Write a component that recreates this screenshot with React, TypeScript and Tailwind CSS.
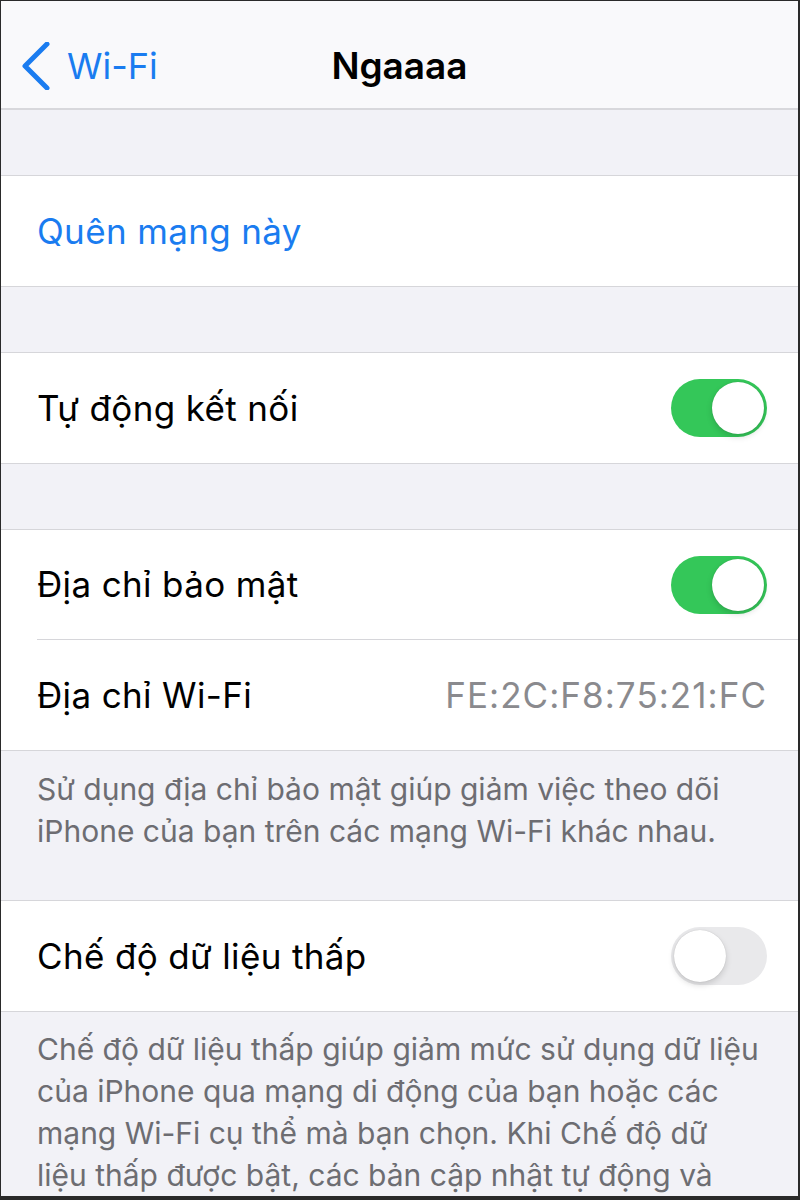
function Toggle({ on }: { on: boolean }) {
  return (
    <div
      className={`relative h-[58px] w-[96px] shrink-0 rounded-full ${
        on ? "bg-[#34c759]" : "bg-[#e9e9eb]"
      }`}
    >
      <div
        className={`absolute top-[3px] h-[52px] w-[52px] rounded-full bg-white shadow-[0_3px_6px_rgba(0,0,0,0.15),0_0_1px_rgba(0,0,0,0.2)] ${
          on ? "right-[3px]" : "left-[3px]"
        }`}
      />
    </div>
  )
}

function Gap() {
  return <div className="h-[66px] border-b border-[#d6d6da] bg-[#f2f2f7]" />
}

function Row({
  label,
  children,
  inset,
}: {
  label: string
  children?: React.ReactNode
  inset?: boolean
}) {
  return (
    <div className="bg-white pl-[36px]">
      <div
        className={`flex h-[110px] items-center justify-between pr-[31px] ${
          inset ? "border-b border-[#d6d6da]" : ""
        }`}
      >
        <span className="text-[35px] tracking-[0.01em] text-black">{label}</span>
        {children}
      </div>
    </div>
  )
}

function Footer({ text, className }: { text: string; className?: string }) {
  return (
    <div className={`bg-[#f2f2f7] px-[36px] text-[30px] leading-[42px] text-[#6d6d72] ${className ?? ""}`}>
      {text}
    </div>
  )
}

export default function App() {
  return (
    <div
      className="h-[1200px] w-[800px] overflow-hidden border-t border-r-2 border-b-4 border-l border-[#2a2a2a] bg-[#f2f2f7]"
      style={{ fontFamily: "Inter, 'Noto Sans', sans-serif" }}
    >
      {/* nav bar */}
      <div className="relative flex h-[109px] items-center border-b-2 border-[#d8d8dc] bg-[#f9f9fb] pt-[22px]">
        <div className="flex items-center pl-[20px] text-[#1a7cf0]">
          <svg width="30" height="48" viewBox="0 0 30 48" fill="none">
            <path
              d="M26 2 L4 24 L26 46"
              stroke="currentColor"
              strokeWidth="5"
              strokeLinecap="round"
              strokeLinejoin="round"
            />
          </svg>
          <span className="ml-[16px] text-[36px]">Wi-Fi</span>
        </div>
        <span className="absolute left-1/2 -translate-x-1/2 text-[37px] font-semibold text-black">
          Ngaaaa
        </span>
      </div>

      <Gap />

      <div className="border-b border-[#d6d6da] bg-white">
        <div className="flex h-[110px] items-center pl-[36px] text-[35px] tracking-[0.01em] text-[#1a7cf0]">
          Quên mạng này
        </div>
      </div>

      <Gap />

      <div className="border-b border-[#d6d6da]">
        <Row label="Tự động kết nối">
          <Toggle on />
        </Row>
      </div>

      <Gap />

      <div className="border-b border-[#d6d6da]">
        <Row label="Địa chỉ bảo mật" inset>
          <Toggle on />
        </Row>
        <Row label="Địa chỉ Wi-Fi">
          <span className="text-[35px] tracking-[0.03em] text-[#8a8a8e]">FE:2C:F8:75:21:FC</span>
        </Row>
      </div>

      <div className="border-b border-[#d6d6da]">
        <Footer
          className="pt-[17px] pb-[46px]"
          text="Sử dụng địa chỉ bảo mật giúp giảm việc theo dõi iPhone của bạn trên các mạng Wi-Fi khác nhau."
        />
        <div className="h-[2px] bg-[#f2f2f7]" />
      </div>

      <div className="border-b border-[#d6d6da]">
        <Row label="Chế độ dữ liệu thấp">
          <Toggle on={false} />
        </Row>
      </div>

      <Footer
        className="pt-[16px]"
        text="Chế độ dữ liệu thấp giúp giảm mức sử dụng dữ liệu của iPhone qua mạng di động của bạn hoặc các mạng Wi-Fi cụ thể mà bạn chọn. Khi Chế độ dữ liệu thấp được bật, các bản cập nhật tự động và các tác vụ chạy nền, chẳng hạn như đồng bộ hóa Ảnh, sẽ bị tạm dừng."
      />
    </div>
  )
}
